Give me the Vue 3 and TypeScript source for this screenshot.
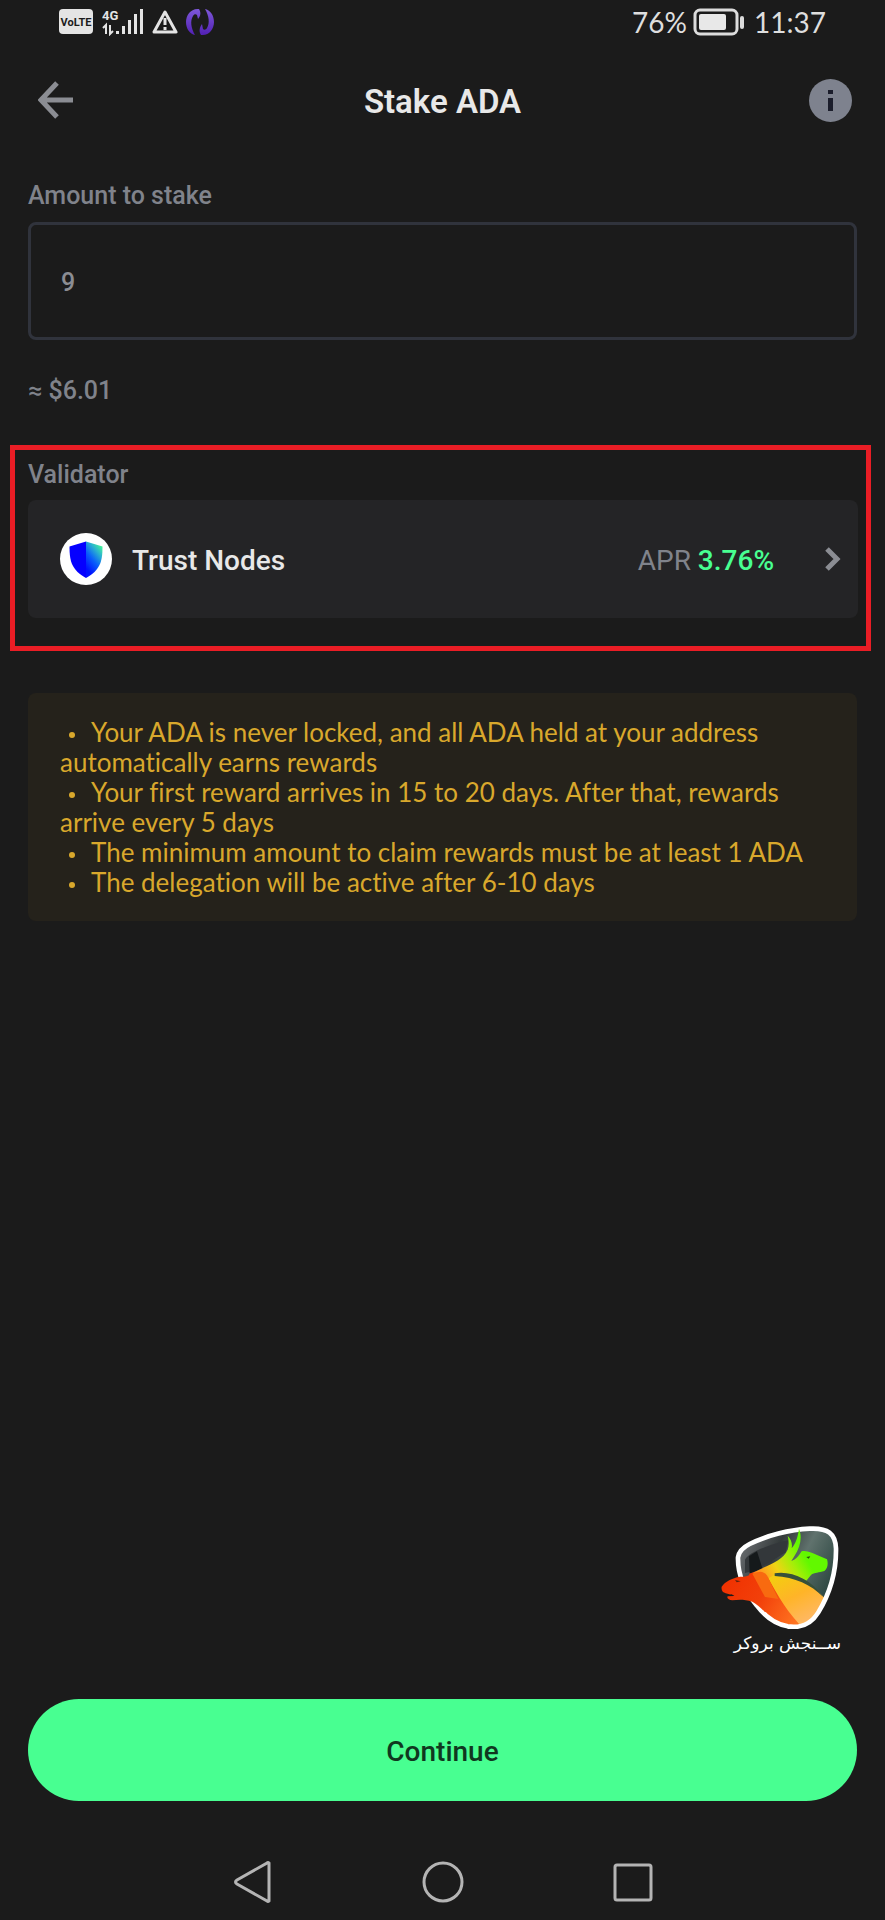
<script setup lang="ts">
import { ref } from 'vue'

const amount = ref('9')
const notes: string[] = [
  'Your ADA is never locked, and all ADA held at your address automatically earns rewards',
  'Your first reward arrives in 15 to 20 days. After that, rewards arrive every 5 days',
  'The minimum amount to claim rewards must be at least 1 ADA',
  'The delegation will be active after 6-10 days',
]
</script>

<template>
  <div class="screen">
    <div class="status">
      <div class="status-side">
        <svg width="34" height="26" viewBox="0 0 34 26" aria-label="VoLTE">
          <rect width="34" height="25" rx="4" fill="#e4e4e4" />
          <text x="17" y="17" text-anchor="middle" class="volte">VoLTE</text>
        </svg>
        <svg class="signal" width="42" height="28" viewBox="0 0 42 28" aria-label="4G signal">
          <text x="0" y="12" class="gen">4G</text>
          <g fill="none" stroke="#e4e4e4" stroke-width="2">
            <path d="M1 20l3-3v9M8 17v9l3-3" />
          </g>
          <g fill="#e4e4e4">
            <rect x="14" y="23" width="3" height="3" />
            <rect x="20" y="18" width="3" height="8" />
            <rect x="26" y="12" width="3" height="14" />
            <rect x="32" y="6" width="3" height="20" />
            <rect x="38" y="1" width="3" height="25" />
          </g>
        </svg>
        <svg class="warn" width="26" height="26" viewBox="0 0 26 26" aria-label="Warning">
          <path d="M13 3L24 23H2Z" fill="none" stroke="#e4e4e4" stroke-width="3" stroke-linejoin="round" />
          <path d="M13 9v7M13 18v3" stroke="#e4e4e4" stroke-width="3" />
        </svg>
        <svg class="sync" width="28" height="28" viewBox="0 0 28 28" aria-label="Sync">
          <defs>
            <linearGradient id="sync-fill" x1="0" y1="0" x2="0" y2="1">
              <stop offset="0" stop-color="#7d58d8" />
              <stop offset="1" stop-color="#5220b4" />
            </linearGradient>
          </defs>
          <g fill="url(#sync-fill)">
            <path d="M13 1C5 0 0 7 0 14C0 21 4 26 9 27C5 20 4 13 7 8C8 6 10 6 11 7L12 11C15 8 15 4 13 1Z" />
            <path d="M15 27C23 28 28 21 28 14C28 7 24 2 19 1C23 8 24 15 21 20C20 22 18 22 17 21L16 16C13 20 13 24 15 27Z" />
          </g>
        </svg>
      </div>
      <div class="status-side">
        <span>76%</span>
        <svg class="battery" width="52" height="28" viewBox="0 0 52 28" aria-label="Battery">
          <rect x="2" y="2" width="42" height="24" rx="5" fill="none" stroke="#dcdcdc" stroke-width="3" />
          <rect x="6" y="6" width="27" height="16" rx="2" fill="#e8e8e8" />
          <rect x="47" y="8" width="4" height="13" rx="2" fill="#dcdcdc" />
        </svg>
        <span class="clock">11:37</span>
      </div>
    </div>

    <header class="header">
      <button class="icon-button" type="button" aria-label="Back">
        <svg width="36" height="38" viewBox="0 0 36 38">
          <path d="M35 19H4M19 2L3 19L19 36" fill="none" stroke="#8b8d93" stroke-width="5" />
        </svg>
      </button>
      <h1>Stake ADA</h1>
      <button class="icon-button info" type="button" aria-label="Information">
        <svg width="43" height="43" viewBox="0 0 43 43">
          <circle cx="21.500" cy="21.500" r="21.500" fill="#7e828e" />
          <path d="M19 11h5v4h-5zM19 19h5v13h-5z" fill="#1b1d2b" />
        </svg>
      </button>
    </header>

    <main class="content">
      <div class="field">
        <label for="amount">Amount to stake</label>
        <input id="amount" v-model="amount" type="text" inputmode="decimal" />
        <p class="fiat">≈ $6.01</p>
      </div>

      <section class="validator">
        <h2>Validator</h2>
        <button class="card" type="button">
          <svg width="52" height="52" viewBox="0 0 52 52">
            <defs>
              <linearGradient id="shield-right" x1="0.800" y1="0" x2="0.300" y2="0.900">
                <stop offset="0" stop-color="#48ff91" />
                <stop offset="0.300" stop-color="#2ab0d0" />
                <stop offset="0.600" stop-color="#0a60fa" />
                <stop offset="1" stop-color="#0010ff" />
              </linearGradient>
            </defs>
            <circle cx="26" cy="26" r="26" fill="#fff" />
            <path d="M26 8.500L9.500 13.500C9.500 29 12 37 26 45Z" fill="#0500ff" />
            <path d="M26 8.500L42.500 13.500C42.500 29 40 37 26 45Z" fill="url(#shield-right)" />
          </svg>
          <span class="name">Trust Nodes</span>
          <span class="apr">APR <strong>3.76%</strong></span>
          <svg class="chevron" width="18" height="26" viewBox="0 0 18 26">
            <path d="M3 3L13 13L3 23" fill="none" stroke="#8b8d93" stroke-width="5" />
          </svg>
        </button>
      </section>

      <ul class="notice">
        <li v-for="note in notes" :key="note">{{ note }}</li>
      </ul>
    </main>

    <footer class="footer">
      <figure class="brand">
        <svg width="120" height="104" viewBox="64 46 360 312">
          <defs>
            <linearGradient id="crest" x1="0" y1="0" x2="1" y2="0.500">
              <stop offset="0" stop-color="#77797b" />
              <stop offset="0.180" stop-color="#5b5f62" />
              <stop offset="0.400" stop-color="#343a3a" />
              <stop offset="0.650" stop-color="#60726d" />
              <stop offset="1" stop-color="#2b4640" />
            </linearGradient>
            <linearGradient id="bear" gradientUnits="userSpaceOnUse" x1="66" y1="210" x2="290" y2="340">
              <stop offset="0" stop-color="#f03000" />
              <stop offset="0.500" stop-color="#f2400a" />
              <stop offset="1" stop-color="#ff7420" />
            </linearGradient>
            <linearGradient id="bull" gradientUnits="userSpaceOnUse" x1="190" y1="200" x2="310" y2="130">
              <stop offset="0" stop-color="#ff9a1e" />
              <stop offset="0.350" stop-color="#f0d414" />
              <stop offset="0.700" stop-color="#a4ee08" />
              <stop offset="1" stop-color="#62f800" />
            </linearGradient>
            <linearGradient id="flank" gradientUnits="userSpaceOnUse" x1="250" y1="190" x2="320" y2="330">
              <stop offset="0" stop-color="#f4cc10" />
              <stop offset="0.500" stop-color="#ffb428" />
              <stop offset="1" stop-color="#ffb860" />
            </linearGradient>
            <clipPath id="crest-clip">
              <path d="M115 143C118 122 132 112 150 103C200 78 270 60 330 57C385 54 407 72 409 116C410 175 394 245 356 308C334 344 300 356 264 350C224 342 196 320 172 288C132 240 114 188 115 143Z" />
            </clipPath>
          </defs>
          <path d="M115 143C118 122 132 112 150 103C200 78 270 60 330 57C385 54 407 72 409 116C410 175 394 245 356 308C334 344 300 356 264 350C224 342 196 320 172 288C132 240 114 188 115 143Z" fill="url(#crest)" />
          <g clip-path="url(#crest-clip)">
            <path d="M136 150C148 126 225 100 266 92L258 128L170 182L136 190Z" fill="#33373a" />
            <path d="M148 140L172 125L188 176L150 192Z" fill="#15191b" />
            <path d="M166 194L230 190C290 196 335 222 374 264L350 320L290 360L200 325L170 285Z" fill="url(#flank)" />
            <path d="M148 192L190 178C225 240 250 290 300 345L260 360L195 325L172 288Z" fill="url(#bear)" />
          </g>
          <path d="M115 143C118 122 132 112 150 103C200 78 270 60 330 57C385 54 407 72 409 116C410 175 394 245 356 308C334 344 300 356 264 350C224 342 196 320 172 288C132 240 114 188 115 143Z" fill="none" stroke="#fff" stroke-width="14" />
          <path d="M66 231C78 215 96 208 112 203C126 200 138 203 148 197C160 192 170 186 182 184L232 290L196 308C184 294 172 284 158 276C132 268 114 270 98 272C88 271 80 264 84 260L104 259C93 254 80 253 70 247C66 242 65 236 66 231Z" fill="url(#bear)" />
          <path d="M106 211l17 4-12 3z" fill="#5b2210" />
          <path d="M82 258l22 1-8-5z" fill="#1b1b1b" />
          <path d="M160 190C215 160 248 154 264 120C269 106 267 90 264 78C274 88 279 102 276 116C289 101 295 80 298 57C308 82 303 110 284 140L275 154C289 151 300 135 306 125C320 121 340 130 352 136L382 149C386 162 384 178 374 184C358 190 344 187 334 196L320 213C290 199 260 190 228 192L200 210Z" fill="url(#bull)" />
          <path d="M158 192C180 182 196 184 206 204L236 268L196 262Z" fill="#f86a10" />
          <path d="M225 191C272 182 334 208 370 261C334 225 286 203 225 199Z" fill="#37503a" />
          <path d="M320 142l12-2-5 7z" fill="#254c10" />
        </svg>
        <figcaption lang="fa" dir="rtl">ســنجش بروکر</figcaption>
      </figure>
      <button class="primary" type="button">Continue</button>
      <nav class="system-nav" aria-label="System navigation">
        <button type="button" aria-label="Back">
          <svg width="44" height="44" viewBox="0 0 44 44">
            <path d="M38 3V41Q37 42 36 41L6 24Q3 22 6 20L36 3Q37 2 38 3Z" />
          </svg>
        </button>
        <button type="button" aria-label="Home">
          <svg width="44" height="44" viewBox="0 0 44 44"><circle cx="22" cy="22" r="19" /></svg>
        </button>
        <button type="button" aria-label="Recent apps">
          <svg width="44" height="44" viewBox="0 0 44 44"><rect x="4" y="5" width="36" height="35" rx="2" /></svg>
        </button>
      </nav>
    </footer>
  </div>
</template>

<style>
body {
  margin: 0;
  background: #1b1b1b;
}
</style>

<style scoped>
.screen {
  box-sizing: border-box;
  min-height: 100vh;
  display: flex;
  flex-direction: column;
  background: #1b1b1b;
  color: #e8e8e8;
  font-family: Roboto, "Noto Sans", sans-serif;
}
button {
  border: 0;
  padding: 0;
  background: none;
  color: inherit;
  font: inherit;
  cursor: pointer;
}
svg {
  display: block;
  flex: none;
}
.status {
  height: 44px;
  padding: 0 59px;
  display: flex;
  align-items: center;
  justify-content: space-between;
  font-family: Lato, sans-serif;
  font-size: 28px;
  line-height: 32px;
  color: #dedede;
}
.status-side {
  display: flex;
  align-items: center;
}
.volte {
  font: 700 11px Roboto, sans-serif;
  fill: #1b1b1b;
}
.gen {
  font: 700 13px Roboto, sans-serif;
  fill: #e4e4e4;
}
.signal {
  margin-left: 9px;
}
.warn {
  margin-left: 8px;
}
.sync {
  margin-left: 8px;
}
.battery {
  margin: 0 9px 0 6px;
}
.header {
  height: 112px;
  padding: 0 33px 0 38px;
  display: grid;
  grid-template-columns: 48px 1fr 53px;
  align-items: center;
}
.icon-button {
  justify-self: start;
}
.info {
  justify-self: end;
}
h1 {
  margin: 0;
  padding-top: 4px;
  text-align: center;
  font-size: 33px;
  line-height: 40px;
  font-weight: 600;
}
.content {
  padding-top: 24px;
  flex: 1;
}
.field {
  padding: 0 28px;
}
label,
h2,
.fiat {
  display: block;
  margin: 0;
  font-size: 25px;
  line-height: 32px;
  font-weight: 500;
  color: #80838b;
}
input {
  box-sizing: border-box;
  display: block;
  width: 100%;
  height: 118px;
  margin: 10px 0 35px;
  padding: 2px 30px 0;
  border: 3px solid #30333c;
  border-radius: 8px;
  background: transparent;
  color: #8b8d93;
  font: inherit;
  font-size: 25px;
  font-weight: 500;
  outline: none;
}
.validator {
  margin: 38px 14px 0 10px;
  padding: 9px 8px 28px 13px;
  border: 5px solid #ea1d25;
}
.card {
  width: 100%;
  height: 118px;
  margin-top: 9px;
  padding: 0 16px 0 32px;
  display: flex;
  align-items: center;
  border-radius: 8px;
  background: #242426;
  font-size: 28px;
  line-height: 36px;
}
.name {
  margin-left: 20px;
  padding-top: 3px;
  flex: 1;
  text-align: left;
  font-weight: 500;
}
.apr {
  padding-top: 3px;
  color: #80838b;
}
.apr strong {
  color: #48ff91;
  font-weight: 500;
}
.chevron {
  margin-left: 50px;
}
.notice {
  margin: 42px 28px 0;
  padding: 24px 32px;
  border-radius: 8px;
  background: #25221b;
  color: #d9a82c;
  font-family: Lato, sans-serif;
  font-size: 26px;
  font-variant-ligatures: none;
  line-height: 30px;
  list-style: none;
}
.notice li::before {
  content: "";
  display: inline-block;
  width: 6px;
  height: 6px;
  margin: 0 16px 0 9px;
  border-radius: 3px;
  background: currentColor;
  vertical-align: middle;
}
.footer {
  padding: 0 28px;
}
.brand {
  width: 120px;
  margin: 0 16px 44px auto;
}
figcaption {
  margin-top: 2px;
  font-family: "DejaVu Sans", sans-serif;
  font-size: 17px;
  font-weight: 500;
  line-height: 24px;
  white-space: nowrap;
  color: #fff;
}
.primary {
  display: block;
  width: 100%;
  height: 102px;
  padding-top: 2px;
  border-radius: 51px;
  background: #48ff91;
  color: #10381f;
  font-size: 28px;
  font-weight: 500;
}
.system-nav {
  box-sizing: border-box;
  height: 119px;
  padding-top: 42px;
  display: flex;
  align-items: center;
  justify-content: center;
  gap: 146px;
}
.system-nav svg {
  fill: none;
  stroke: #b4b4b4;
  stroke-width: 3;
}
</style>
